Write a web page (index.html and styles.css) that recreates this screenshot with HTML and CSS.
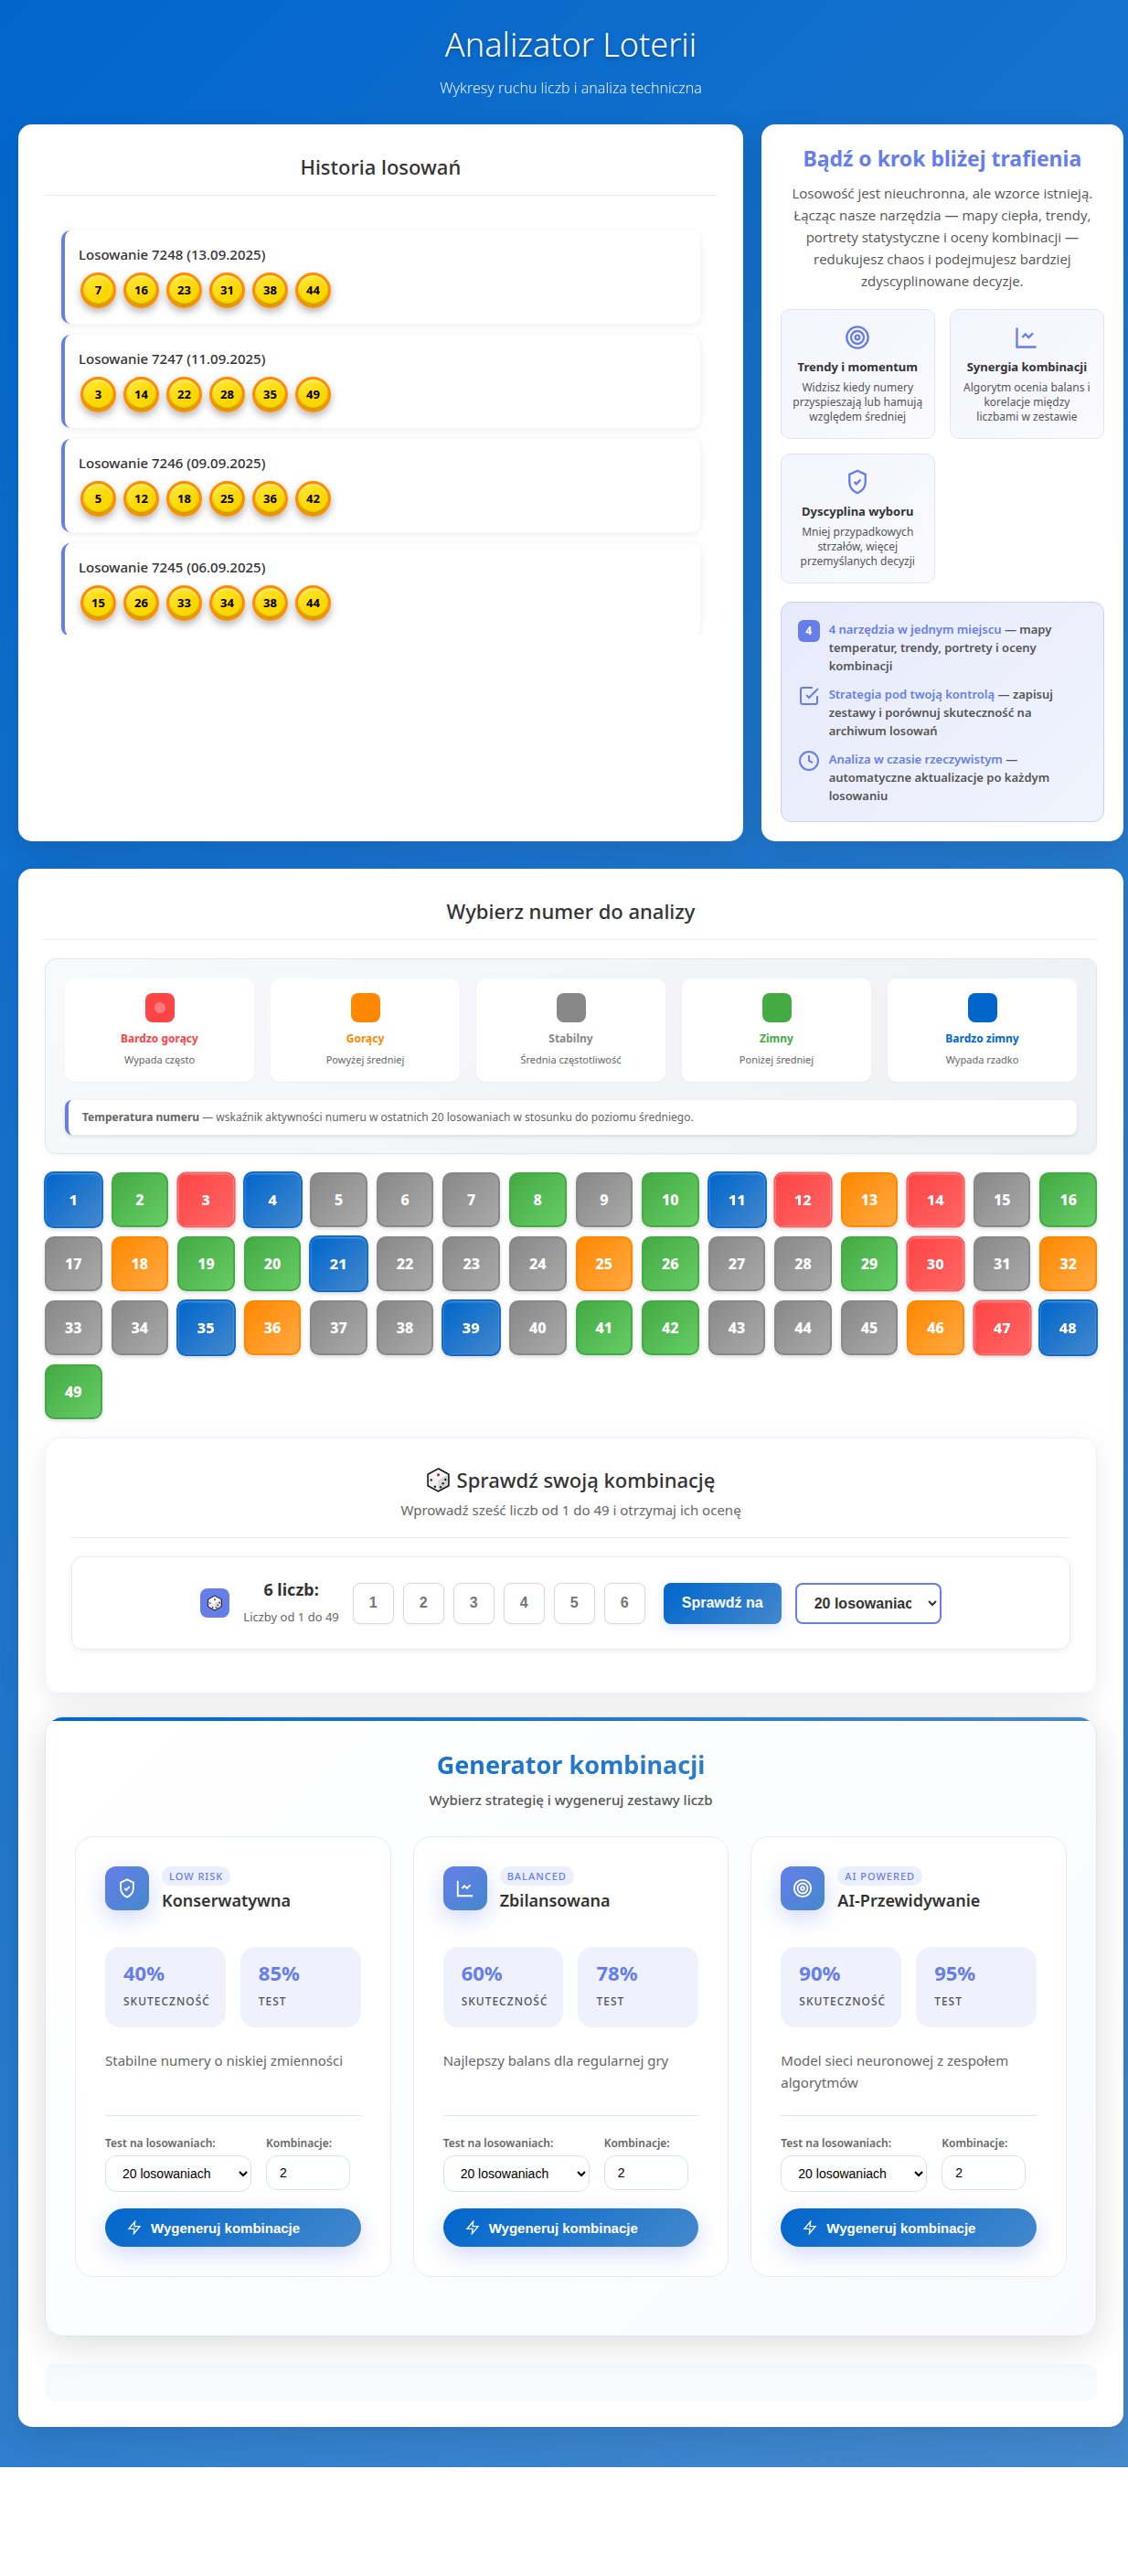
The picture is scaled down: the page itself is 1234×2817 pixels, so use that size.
FILE: index.html
```html
<!DOCTYPE html>
<html lang="pl">
<head>
<meta charset="utf-8">
<meta name="viewport" content="width=device-width, initial-scale=1">
<title>Analizator Loterii</title>
<link rel="stylesheet" href="styles.css">
</head>
<body>
<svg class="sprite" aria-hidden="true">
  <symbol id="i-target" viewBox="0 0 24 24"><circle cx="12" cy="12" r="10"/><circle cx="12" cy="12" r="6"/><circle cx="12" cy="12" r="2"/></symbol>
  <symbol id="i-chart" viewBox="0 0 24 24"><path d="M3 3v18h18"/><path d="M8 12l3-3 3 3 4-4"/></symbol>
  <symbol id="i-shield" viewBox="0 0 24 24"><path d="M12 1.500L4.500 5v7c0 5 3.500 8.700 7.500 10.500 4-1.800 7.500-5.500 7.500-10.500V5L12 1.500z"/><path d="M9 12l2 2 4-4"/></symbol>
  <symbol id="i-check" viewBox="0 0 24 24"><path d="M9 11l3 3L22 4"/><path d="M21 12v7a2 2 0 0 1-2 2H5a2 2 0 0 1-2-2V5a2 2 0 0 1 2-2h11"/></symbol>
  <symbol id="i-clock" viewBox="0 0 24 24"><circle cx="12" cy="12" r="10"/><path d="M12 6v6l4 2"/></symbol>
  <symbol id="i-bolt" viewBox="0 0 24 24"><path d="M13 2L3 14h9l-1 8 10-12h-9l1-8z"/></symbol>
  <symbol id="i-die" viewBox="0 0 24 26">
    <path d="M12 1L23 7v12l-11 6L1 19V7z" fill="#f1f1f1" stroke="none"/>
    <path d="M12 1L23 7l-11 6L1 7z" fill="#fff" stroke="none"/>
    <path d="M12 13l11-6v12l-11 6z" fill="#d6d6d6" stroke="none"/>
    <path d="M12 1L23 7v12l-11 6L1 19V7z" fill="none" stroke="#111" stroke-width="1.500"/>
    <circle cx="12" cy="7.500" r="1.600" fill="#c1272d" stroke="none"/>
    <g fill="#222" stroke="none"><circle cx="4.500" cy="13" r="1.200"/><circle cx="8.500" cy="20" r="1.200"/><circle cx="14.500" cy="20.500" r="1.200"/><circle cx="17" cy="16.500" r="1.200"/><circle cx="19.500" cy="12.500" r="1.200"/></g>
  </symbol>
</svg>
<div class="app">
  <header class="header">
    <h1>Analizator Loterii</h1>
    <p>Wykresy ruchu liczb i analiza techniczna</p>
  </header>

  <div class="top">
    <section class="panel history">
      <h2 class="panel-title">Historia losowań</h2>
      <div class="draws">
        <article class="draw"><h3>Losowanie 7248 (13.09.2025)</h3><div class="balls"><span>7</span><span>16</span><span>23</span><span>31</span><span>38</span><span>44</span></div></article>
        <article class="draw"><h3>Losowanie 7247 (11.09.2025)</h3><div class="balls"><span>3</span><span>14</span><span>22</span><span>28</span><span>35</span><span>49</span></div></article>
        <article class="draw"><h3>Losowanie 7246 (09.09.2025)</h3><div class="balls"><span>5</span><span>12</span><span>18</span><span>25</span><span>36</span><span>42</span></div></article>
        <article class="draw"><h3>Losowanie 7245 (06.09.2025)</h3><div class="balls"><span>15</span><span>26</span><span>33</span><span>34</span><span>38</span><span>44</span></div></article>
      </div>
    </section>

    <aside class="panel promo">
      <h2>Bądź o krok bliżej trafienia</h2>
      <p class="lead">Losowość jest nieuchronna, ale wzorce istnieją. Łącząc nasze narzędzia — mapy ciepła, trendy, portrety statystyczne i oceny kombinacji — redukujesz chaos i podejmujesz bardziej zdyscyplinowane decyzje.</p>
      <div class="features">
        <article class="feature"><svg class="icon"><use href="#i-target"/></svg><h3>Trendy i momentum</h3><p>Widzisz kiedy numery przyspieszają lub hamują względem średniej</p></article>
        <article class="feature"><svg class="icon"><use href="#i-chart"/></svg><h3>Synergia kombinacji</h3><p>Algorytm ocenia balans i korelacje między<br>liczbami w zestawie</p></article>
        <article class="feature"><svg class="icon"><use href="#i-shield"/></svg><h3>Dyscyplina wyboru</h3><p>Mniej przypadkowych strzałów, więcej przemyślanych decyzji</p></article>
      </div>
      <ul class="benefits">
        <li><span class="count">4</span><p><strong>4 narzędzia w jednym miejscu</strong> — mapy temperatur, trendy, portrety i oceny kombinacji</p></li>
        <li><svg class="icon"><use href="#i-check"/></svg><p><strong>Strategia pod twoją kontrolą</strong> — zapisuj zestawy i porównuj skuteczność na archiwum losowań</p></li>
        <li><svg class="icon"><use href="#i-clock"/></svg><p><strong>Analiza w czasie rzeczywistym</strong> — automatyczne aktualizacje po każdym losowaniu</p></li>
      </ul>
    </aside>
  </div>

  <main class="panel main">
    <h2 class="panel-title">Wybierz numer do analizy</h2>

    <section class="legend">
      <div class="legend-items">
        <div class="legend-item hot"><span class="swatch"></span><strong>Bardzo gorący</strong><small>Wypada często</small></div>
        <div class="legend-item warm"><span class="swatch"></span><strong>Gorący</strong><small>Powyżej średniej</small></div>
        <div class="legend-item stable"><span class="swatch"></span><strong>Stabilny</strong><small>Średnia częstotliwość</small></div>
        <div class="legend-item cold"><span class="swatch"></span><strong>Zimny</strong><small>Poniżej średniej</small></div>
        <div class="legend-item frozen"><span class="swatch"></span><strong>Bardzo zimny</strong><small>Wypada rzadko</small></div>
      </div>
      <p class="legend-note"><strong>Temperatura numeru</strong> — wskaźnik aktywności numeru w ostatnich 20 losowaniach w stosunku do poziomu średniego.</p>
    </section>

    <div class="numbers">
      <button class="frozen">1</button><button class="cold">2</button><button class="hot">3</button><button class="frozen">4</button><button class="stable">5</button><button class="stable">6</button><button class="stable">7</button><button class="cold">8</button><button class="stable">9</button><button class="cold">10</button><button class="frozen">11</button><button class="hot">12</button><button class="warm">13</button><button class="hot">14</button><button class="stable">15</button><button class="cold">16</button>
      <button class="stable">17</button><button class="warm">18</button><button class="cold">19</button><button class="cold">20</button><button class="frozen">21</button><button class="stable">22</button><button class="stable">23</button><button class="stable">24</button><button class="warm">25</button><button class="cold">26</button><button class="stable">27</button><button class="stable">28</button><button class="cold">29</button><button class="hot">30</button><button class="stable">31</button><button class="warm">32</button>
      <button class="stable">33</button><button class="stable">34</button><button class="frozen">35</button><button class="warm">36</button><button class="stable">37</button><button class="stable">38</button><button class="frozen">39</button><button class="stable">40</button><button class="cold">41</button><button class="cold">42</button><button class="stable">43</button><button class="stable">44</button><button class="stable">45</button><button class="warm">46</button><button class="hot">47</button><button class="frozen">48</button>
      <button class="cold">49</button>
    </div>

    <section class="checker">
      <header class="checker-head">
        <h2><svg class="die"><use href="#i-die"/></svg>Sprawdź swoją kombinację</h2>
        <p>Wprowadź sześć liczb od 1 do 49 i otrzymaj ich ocenę</p>
      </header>
      <form class="checker-form">
        <span class="die-box"><svg class="die"><use href="#i-die"/></svg></span>
        <div class="checker-label"><strong>6 liczb:</strong><small>Liczby od 1 do 49</small></div>
        <div class="picks">
          <input type="text" placeholder="1" aria-label="Liczba 1"><input type="text" placeholder="2" aria-label="Liczba 2"><input type="text" placeholder="3" aria-label="Liczba 3"><input type="text" placeholder="4" aria-label="Liczba 4"><input type="text" placeholder="5" aria-label="Liczba 5"><input type="text" placeholder="6" aria-label="Liczba 6">
        </div>
        <button type="button" class="check-btn">Sprawdź na</button>
        <select class="check-select" aria-label="Zakres losowań"><option>20 losowaniach</option></select>
      </form>
    </section>

    <section class="generator">
      <header class="generator-head">
        <h2>Generator kombinacji</h2>
        <p>Wybierz strategię i wygeneruj zestawy liczb</p>
      </header>
      <div class="strategies">
        <article class="strategy">
          <div class="strategy-head"><span class="tile"><svg class="icon"><use href="#i-shield"/></svg></span><div><span class="badge">LOW RISK</span><h3>Konserwatywna</h3></div></div>
          <div class="stats"><div class="stat"><strong>40%</strong><span>SKUTECZNOŚĆ</span></div><div class="stat"><strong>85%</strong><span>TEST</span></div></div>
          <p class="about">Stabilne numery o niskiej zmienności</p>
          <div class="options">
            <div class="field"><label for="t1">Test na losowaniach:</label><select id="t1"><option>20 losowaniach</option></select></div>
            <div class="field"><label for="k1">Kombinacje:</label><input id="k1" type="text" value="2"></div>
          </div>
          <button class="generate"><svg class="icon"><use href="#i-bolt"/></svg>Wygeneruj kombinacje</button>
        </article>
        <article class="strategy">
          <div class="strategy-head"><span class="tile"><svg class="icon"><use href="#i-chart"/></svg></span><div><span class="badge">BALANCED</span><h3>Zbilansowana</h3></div></div>
          <div class="stats"><div class="stat"><strong>60%</strong><span>SKUTECZNOŚĆ</span></div><div class="stat"><strong>78%</strong><span>TEST</span></div></div>
          <p class="about">Najlepszy balans dla regularnej gry</p>
          <div class="options">
            <div class="field"><label for="t2">Test na losowaniach:</label><select id="t2"><option>20 losowaniach</option></select></div>
            <div class="field"><label for="k2">Kombinacje:</label><input id="k2" type="text" value="2"></div>
          </div>
          <button class="generate"><svg class="icon"><use href="#i-bolt"/></svg>Wygeneruj kombinacje</button>
        </article>
        <article class="strategy">
          <div class="strategy-head"><span class="tile"><svg class="icon"><use href="#i-target"/></svg></span><div><span class="badge">AI POWERED</span><h3>AI-Przewidywanie</h3></div></div>
          <div class="stats"><div class="stat"><strong>90%</strong><span>SKUTECZNOŚĆ</span></div><div class="stat"><strong>95%</strong><span>TEST</span></div></div>
          <p class="about">Model sieci neuronowej z zespołem algorytmów</p>
          <div class="options">
            <div class="field"><label for="t3">Test na losowaniach:</label><select id="t3"><option>20 losowaniach</option></select></div>
            <div class="field"><label for="k3">Kombinacje:</label><input id="k3" type="text" value="2"></div>
          </div>
          <button class="generate"><svg class="icon"><use href="#i-bolt"/></svg>Wygeneruj kombinacje</button>
        </article>
      </div>
    </section>

    <div class="results"></div>
  </main>
</div>
</body>
</html>
```
FILE: styles.css
```css
:root {
  --blue: #0066cc;
  --indigo: #667eea;
  --ink: #333;
  --muted: #555;
  --soft: #666;
  --brand: linear-gradient(135deg, #0066cc 0%, #4488cc 100%);
}

* { box-sizing: border-box; margin: 0; padding: 0; }

html { background: #fff; }

body {
  font-family: "Noto Sans", "Open Sans", sans-serif;
  font-size: 15px;
  line-height: 24px;
  color: var(--ink);
}

.sprite { display: none; }
.icon { fill: none; stroke: currentColor; stroke-width: 2; flex: none; }

button, input, select { font-family: "Liberation Sans", Arial, sans-serif; }

.app {
  background: var(--brand);
  padding: 20px 5px 44px 20px;
}

/* Header */
.header { height: 116px; text-align: center; color: #fff; }
.header h1 {
  font-size: 36px;
  line-height: 58px;
  font-weight: 300;
  text-shadow: 0 2px 4px rgba(0, 0, 0, 0.3);
}
.header p { font-size: 16px; line-height: 36px; font-weight: 300; opacity: 0.9; }

/* Panels */
.panel {
  background: #fff;
  border-radius: 15px;
  box-shadow: 0 10px 30px rgba(0, 0, 0, 0.1);
}
.panel-title {
  font-size: 22px;
  line-height: 34px;
  font-weight: 500;
  text-align: center;
  padding-bottom: 14px;
  border-bottom: 1px solid #e8eaf6;
}

.top {
  display: grid;
  grid-template-columns: 2fr 1fr;
  gap: 20px;
  margin-bottom: 30px;
}

/* Draw history */
.history { padding: 29px; }
.draws {
  margin-top: 20px;
  padding: 18px;
  height: 460px;
  overflow: hidden;
}
.draw {
  height: 102px;
  margin-bottom: 12px;
  padding: 14px 15px;
  border-left: 4px solid var(--indigo);
  border-radius: 10px;
  box-shadow: 0 2px 8px rgba(0, 0, 0, 0.08);
}
.draw h3 { font-size: 15px; line-height: 24px; font-weight: 500; }
.balls { display: flex; gap: 8px; padding: 8px 2px; }
.balls span {
  width: 39px;
  height: 39px;
  border: 3px solid #ff8c00;
  border-radius: 50%;
  background: linear-gradient(145deg, #ffeb3b, #ffd700 60%);
  box-shadow: 0 4px 8px rgba(0, 0, 0, 0.3), inset 0 2px 2px rgba(255, 255, 255, 0.4), inset 0 -2px 2px rgba(0, 0, 0, 0.3);
  color: #000;
  font-size: 13px;
  line-height: 33px;
  font-weight: 700;
  text-align: center;
}

/* Promo column */
.promo { padding: 19px 21px 21px; }
.promo h2 {
  color: var(--indigo);
  font-size: 23px;
  line-height: 36px;
  font-weight: 700;
  text-align: center;
}
.lead {
  margin: 8px 0 19px;
  font-family: "Open Sans", "Noto Sans", sans-serif;
  font-size: 15px;
  line-height: 24px;
  font-weight: 500;
  color: var(--muted);
  text-align: center;
}
.features { display: grid; grid-template-columns: 1fr 1fr; gap: 16px; }
.feature {
  height: 142px;
  padding: 16px 12px;
  border: 1px solid #dfe4fb;
  border-radius: 10px;
  background: linear-gradient(135deg, #f3f5fe, #fafaff);
  text-align: center;
}
.feature .icon { display: block; width: 28px; height: 28px; margin: 0 auto 8px; color: var(--indigo); }
.feature h3 { font-size: 13px; line-height: 20px; font-weight: 700; margin-bottom: 5px; }
.feature p { font-size: 12px; line-height: 16px; color: var(--muted); }

.benefits {
  display: grid;
  gap: 11px;
  margin-top: 20px;
  padding: 19px 18px 18px;
  list-style: none;
  border: 1px solid #c6cff7;
  border-radius: 12px;
  background: linear-gradient(135deg, #e7eafb, #f0f4fc);
}
.benefits li { display: flex; gap: 10px; }
.benefits .icon { width: 24px; height: 24px; color: var(--indigo); }
.benefits p { font-size: 13px; line-height: 20px; font-weight: 600; color: var(--muted); }
.benefits strong { font-weight: 600; color: var(--indigo); }
.count {
  flex: none;
  width: 24px;
  height: 24px;
  border-radius: 6px;
  background: var(--indigo);
  color: #fff;
  font-size: 12px;
  line-height: 24px;
  font-weight: 700;
  text-align: center;
}

/* Main panel */
.main { padding: 29px; }

.legend {
  margin-top: 20px;
  padding: 21px 21px 20px;
  border: 1px solid #e3e5e9;
  border-radius: 12px;
  background: linear-gradient(135deg, #f8f9fb, #eff0f5);
  box-shadow: 0 2px 8px rgba(0, 0, 0, 0.04);
}
.legend-items { display: grid; grid-template-columns: repeat(5, 1fr); gap: 18px; }
.legend-item {
  display: flex;
  flex-direction: column;
  align-items: center;
  height: 113px;
  padding-top: 16px;
  border-radius: 10px;
  background: #fff;
  box-shadow: 0 1px 2px rgba(0, 0, 0, 0.04);
}
.swatch {
  display: grid;
  place-items: center;
  width: 32px;
  height: 32px;
  margin-bottom: 6px;
  border-radius: 8px;
  background: currentColor;
}
.legend-item.hot .swatch::before {
  content: "";
  width: 12px;
  height: 12px;
  border-radius: 50%;
  background: rgba(255, 255, 255, 0.3);
}
.legend-item strong { font-size: 12px; line-height: 24px; font-weight: 700; }
.legend-item small { font-size: 11px; line-height: 22px; color: var(--soft); }
.legend-item.hot { color: #ff4444; }
.legend-item.warm { color: #ff8800; }
.legend-item.stable { color: #888; }
.legend-item.cold { color: #44aa44; }
.legend-item.frozen { color: var(--blue); }

.legend-note {
  margin-top: 20px;
  padding: 7px 15px;
  border-left: 4px solid var(--indigo);
  border-radius: 8px;
  background: #fff;
  box-shadow: 0 2px 4px rgba(0, 0, 0, 0.1);
  font-size: 12px;
  line-height: 24px;
  color: var(--soft);
}

/* Number grid */
.numbers {
  display: grid;
  grid-template-columns: repeat(16, 1fr);
  gap: 10px;
  margin-top: 20px;
}
.numbers button {
  height: 60px;
  border: 2px solid;
  border-radius: 10px;
  box-shadow: 0 2px 4px rgba(0, 0, 0, 0.14);
  color: #fff;
  font-family: "Noto Sans", "Open Sans", sans-serif;
  font-size: 16px;
  font-weight: 800;
}
.numbers .hot {
  border-color: #ff5c5c;
  background: linear-gradient(135deg, #ff4444, #ff6666);
  transform: scale(1.02);
  box-shadow: 0 2px 4px rgba(0, 0, 0, 0.12), inset 0 1px 1px rgba(255, 255, 255, 0.3);
}
.numbers .warm { border-color: #ff8800; background: linear-gradient(135deg, #ff8800, #ffaa44); }
.numbers .stable { border-color: #888; background: linear-gradient(135deg, #888, #aaa); }
.numbers .cold { border-color: #44aa44; background: linear-gradient(135deg, #44aa44, #66cc66); }
.numbers .frozen {
  border-color: #0d6bd0;
  background: var(--brand);
  transform: scale(1.03);
  box-shadow: 0 2px 4px rgba(0, 0, 0, 0.15), inset 0 1px 1px rgba(255, 255, 255, 0.3);
}

/* Combination checker */
.checker {
  margin-top: 20px;
  padding: 27px 28px 47px;
  border: 1px solid #f0f1fe;
  border-radius: 16px;
  box-shadow: 0 8px 32px rgba(0, 0, 0, 0.08);
  text-align: center;
}
.checker-head { padding-bottom: 15px; border-bottom: 1px solid #e8eaf6; }
.checker-head h2 {
  display: flex;
  justify-content: center;
  align-items: center;
  gap: 8px;
  font-size: 22px;
  line-height: 36px;
  font-weight: 500;
}
.checker-head .die { width: 25px; height: 27px; }
.checker-head p { line-height: 30px; color: var(--soft); }
.checker-form {
  display: flex;
  justify-content: center;
  align-items: center;
  gap: 15px;
  margin-top: 20px;
  padding: 20px 18px;
  border: 1px solid #e8e9ee;
  border-radius: 12px;
  box-shadow: 0 2px 8px rgba(0, 0, 0, 0.06);
}
.die-box {
  display: grid;
  place-items: center;
  width: 32px;
  height: 32px;
  border-radius: 8px;
  background: var(--indigo);
}
.die-box .die { width: 16px; height: 18px; }
.checker-label { display: grid; }
.checker-label strong { font-size: 18px; line-height: 30px; font-weight: 700; }
.checker-label small { font-size: 13px; line-height: 30px; color: var(--soft); }
.picks { display: flex; gap: 10px; margin-right: 5px; }
.picks input {
  width: 45px;
  height: 45px;
  border: 1px solid #d9d9d9;
  border-radius: 8px;
  box-shadow: 0 1px 3px rgba(0, 0, 0, 0.06);
  font-size: 16px;
  font-weight: 700;
  text-align: center;
}
.picks input::placeholder { color: #757575; }
.check-btn {
  height: 45px;
  padding: 0 20px;
  border: 0;
  border-radius: 8px;
  background: var(--brand);
  box-shadow: 0 4px 12px rgba(102, 126, 234, 0.2);
  color: #fff;
  font-size: 16px;
  font-weight: 700;
}
.check-select {
  width: 160px;
  height: 45px;
  padding: 0 15px;
  border: 2px solid var(--indigo);
  border-radius: 8px;
  background: #fff;
  color: var(--ink);
  font-size: 16px;
  font-weight: 700;
}

/* Generator */
.generator {
  position: relative;
  overflow: hidden;
  margin-top: 25px;
  padding: 32px 32px 64px;
  border: 1px solid #dfe3fb;
  border-radius: 20px;
  background: linear-gradient(135deg, #fff, #f8faff);
  box-shadow: 0 8px 40px rgba(0, 0, 0, 0.14);
}
.generator::before {
  content: "";
  position: absolute;
  top: 0;
  left: 0;
  right: 0;
  height: 4px;
  background: linear-gradient(90deg, #0066cc, #4488cc);
}
.generator-head { text-align: center; margin-bottom: 22px; }
.generator-head h2 {
  font-size: 27px;
  line-height: 40px;
  font-weight: 700;
  color: transparent;
  background: linear-gradient(135deg, #0066cc, #4488cc);
  -webkit-background-clip: text;
  background-clip: text;
}
.generator-head p { font-size: 15px; line-height: 36px; font-weight: 500; color: var(--muted); }
.strategies { display: grid; grid-template-columns: repeat(3, 1fr); gap: 24px; }
.strategy {
  padding: 32px;
  border: 1px solid #e6e9fc;
  border-radius: 20px;
  background: #fff;
}
.strategy-head { display: flex; gap: 14px; margin-bottom: 40px; }
.strategy-head > div { height: 48px; }
.tile {
  display: grid;
  place-items: center;
  width: 48px;
  height: 48px;
  border-radius: 12px;
  background: linear-gradient(135deg, #667eea, #4488cc);
  box-shadow: 0 8px 24px rgba(102, 126, 234, 0.3);
  color: #fff;
}
.tile .icon { width: 22px; height: 22px; }
.badge {
  display: block;
  width: max-content;
  padding: 0 8px;
  border-radius: 12px;
  background: #ebeefc;
  color: var(--indigo);
  font-size: 11px;
  line-height: 21px;
  font-weight: 500;
  letter-spacing: 1px;
}
.strategy h3 { font-size: 18px; line-height: 32px; font-weight: 600; }
.stats { display: grid; grid-template-columns: repeat(2, minmax(0, 1fr)); gap: 16px; }
.stat {
  display: grid;
  height: 88px;
  padding: 12px 15px 14px 20px;
  align-content: start;
  border-radius: 16px;
  background: #eff1fd;
}
.stat strong { font-size: 22px; line-height: 32px; font-weight: 700; color: var(--indigo); }
.stat span { font-size: 12px; line-height: 32px; font-weight: 500; letter-spacing: 1px; color: var(--muted); }
.about { min-height: 48px; margin: 24px 0; color: var(--soft); }
.options {
  display: flex;
  gap: 16px;
  height: 102px;
  padding-top: 20px;
  border-top: 1px solid #dfe6f3;
}
.field { display: flex; flex-direction: column; align-items: flex-start; }
.field label { font-size: 12px; line-height: 20px; margin-bottom: 3px; font-weight: 600; color: var(--soft); }
.field select, .field input {
  border: 1px solid #d9dffa;
  border-radius: 12px;
  background: #fff;
  color: #000;
  font-size: 14px;
}
.field select { width: 160px; height: 40px; padding: 0 14px; }
.field input { width: 92px; height: 38px; padding: 0 14px; }
.generate {
  display: flex;
  align-items: center;
  gap: 10px;
  width: 100%;
  height: 42px;
  padding: 0 24px;
  border: 0;
  border-radius: 21px;
  background: var(--brand);
  box-shadow: 0 8px 24px rgba(102, 126, 234, 0.3);
  color: #fff;
  font-size: 15px;
  font-weight: 700;
}
.generate .icon { width: 16px; height: 16px; }

.results { height: 40px; margin-top: 30px; border-radius: 10px; background: #f8f9fb; }
```
